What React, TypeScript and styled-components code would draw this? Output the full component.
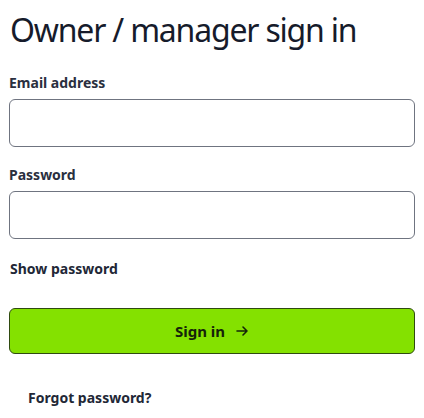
import React from "react";
import styled, { createGlobalStyle } from "styled-components";

const GlobalStyle = createGlobalStyle`
  html, body {
    margin: 0;
    padding: 0;
    background: #ffffff;
  }
  body {
    font-family: "Noto Sans", "Open Sans", sans-serif;
    color: #1d2230;
  }
`;

const Page = styled.main`
  padding: 0 9px;
  display: flex;
  flex-direction: column;
`;

const Title = styled.h1`
  margin: 8px 0 0 1px;
  font-size: 32px;
  font-weight: 400;
  line-height: 44px;
  letter-spacing: -1.2px;
  color: #161b2b;
`;

const Field = styled.div<{ $top: number }>`
  display: flex;
  flex-direction: column;
  margin-top: ${(p) => p.$top}px;
`;

const Label = styled.label`
  font-size: 14px;
  font-weight: 700;
  line-height: 20px;
  color: #2a2f3e;
  margin-bottom: 6px;
`;

const Input = styled.input`
  box-sizing: border-box;
  width: 100%;
  height: 48px;
  border: 1px solid #6f7480;
  border-radius: 6px;
  padding: 0 12px;
  font: inherit;
  font-size: 16px;
  outline: none;
`;

const TextButton = styled.button<{ $indent: number; $top: number }>`
  align-self: flex-start;
  background: none;
  border: none;
  padding: 0;
  margin: ${(p) => p.$top}px 0 0 ${(p) => p.$indent}px;
  font-family: "Noto Sans", "Open Sans", sans-serif;
  font-size: 14px;
  font-weight: 700;
  line-height: 20px;
  color: #222736;
  cursor: pointer;
`;

const SubmitButton = styled.button`
  margin-top: 29px;
  box-sizing: border-box;
  width: 100%;
  height: 46px;
  border: 1px solid #2f4a10;
  border-radius: 6px;
  background: #84e100;
  display: flex;
  align-items: center;
  justify-content: center;
  gap: 10px;
  font-family: "Noto Sans", "Open Sans", sans-serif;
  font-size: 15px;
  font-weight: 700;
  color: #15230a;
  cursor: pointer;
`;

const Arrow = () => (
  <svg width="14" height="14" viewBox="0 0 14 14" fill="none" stroke="#15230a" strokeWidth="1.6" strokeLinecap="round" strokeLinejoin="round">
    <path d="M2 7h10M8 3l4 4-4 4" />
  </svg>
);

export default function App() {
  return (
    <>
      <GlobalStyle />
      <Page>
        <Title>Owner / manager sign in</Title>
        <Field $top={21}>
          <Label htmlFor="email">Email address</Label>
          <Input id="email" type="email" />
        </Field>
        <Field $top={18}>
          <Label htmlFor="password">Password</Label>
          <Input id="password" type="password" />
        </Field>
        <TextButton $indent={1} $top={20}>Show password</TextButton>
        <SubmitButton>
          Sign in <Arrow />
        </SubmitButton>
        <TextButton $indent={19} $top={34}>Forgot password?</TextButton>
      </Page>
    </>
  );
}
